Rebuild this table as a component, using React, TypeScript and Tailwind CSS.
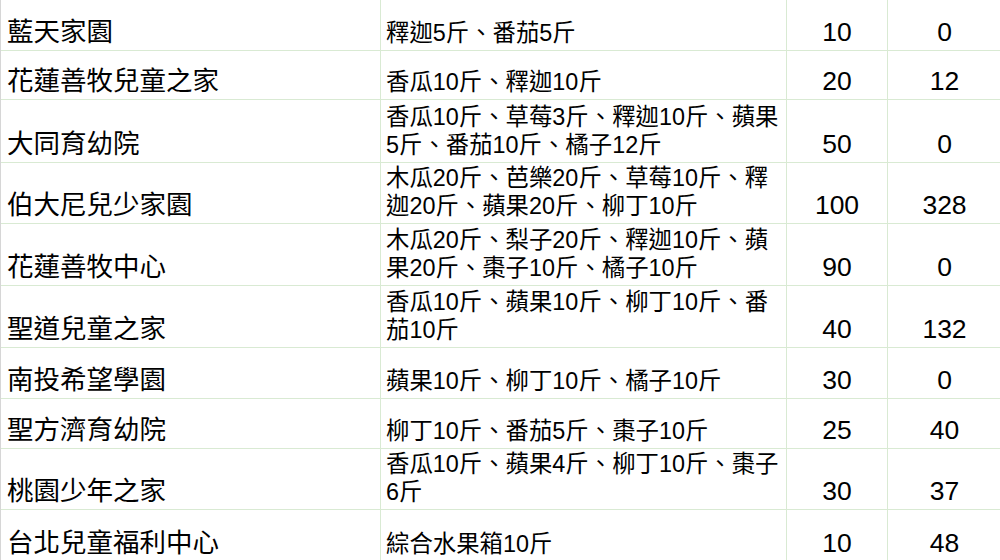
import React from 'react';

interface Row {
  name: string;
  items: string[];
  qty: number;
  got: number;
  height: string;
}

const rows: Row[] = [
  { name: '藍天家園', items: ['釋迦5斤、番茄5斤'], qty: 10, got: 0, height: 'h-[51px]' },
  { name: '花蓮善牧兒童之家', items: ['香瓜10斤、釋迦10斤'], qty: 20, got: 12, height: 'h-[49px]' },
  {
    name: '大同育幼院',
    items: ['香瓜10斤、草莓3斤、釋迦10斤、蘋果', '5斤、番茄10斤、橘子12斤'],
    qty: 50,
    got: 0,
    height: 'h-[63px]',
  },
  {
    name: '伯大尼兒少家園',
    items: ['木瓜20斤、芭樂20斤、草莓10斤、釋', '迦20斤、蘋果20斤、柳丁10斤'],
    qty: 100,
    got: 328,
    height: 'h-[61px]',
  },
  {
    name: '花蓮善牧中心',
    items: ['木瓜20斤、梨子20斤、釋迦10斤、蘋', '果20斤、棗子10斤、橘子10斤'],
    qty: 90,
    got: 0,
    height: 'h-[62px]',
  },
  {
    name: '聖道兒童之家',
    items: ['香瓜10斤、蘋果10斤、柳丁10斤、番', '茄10斤'],
    qty: 40,
    got: 132,
    height: 'h-[62px]',
  },
  { name: '南投希望學園', items: ['蘋果10斤、柳丁10斤、橘子10斤'], qty: 30, got: 0, height: 'h-[51px]' },
  { name: '聖方濟育幼院', items: ['柳丁10斤、番茄5斤、棗子10斤'], qty: 25, got: 40, height: 'h-[50px]' },
  {
    name: '桃園少年之家',
    items: ['香瓜10斤、蘋果4斤、柳丁10斤、棗子', '6斤'],
    qty: 30,
    got: 37,
    height: 'h-[61px]',
  },
  { name: '台北兒童福利中心', items: ['綜合水果箱10斤'], qty: 10, got: 48, height: 'h-[52px]' },
];

const App = () => {
  return (
    <div
      className="w-[1000px] h-[560px] overflow-hidden bg-white text-black"
      style={{ fontFamily: '"Liberation Sans", "Noto Sans CJK TC", sans-serif' }}
    >
      <div className="w-[1002px] border-l border-[#d6d6d6]">
        {rows.map((row) => (
          <div key={row.name} className={`flex border-b border-[#d9ead3] ${row.height}`}>
            {/* Name */}
            <div className="w-[380px] shrink-0 flex flex-col justify-end border-r border-[#d9ead3] pl-[6px] pb-[3px] text-[26.5px] leading-[30px] whitespace-nowrap">
              {row.name}
            </div>

            {/* Fruit list */}
            <div className="w-[406px] shrink-0 flex flex-col justify-end border-r border-[#d9ead3] pl-[5px] pb-[3px] text-[23.4px] leading-[28px] whitespace-nowrap">
              {row.items.map((line) => (
                <div key={line}>{line}</div>
              ))}
            </div>

            {/* Numbers */}
            <div className="w-[101px] shrink-0 flex flex-col justify-end items-center border-r border-[#d9ead3] pb-[3px] text-[26.5px] leading-[30px]">
              {row.qty}
            </div>
            <div className="w-[113px] shrink-0 flex flex-col justify-end items-center pb-[3px] text-[26.5px] leading-[30px]">
              {row.got}
            </div>
          </div>
        ))}
      </div>
    </div>
  );
};

export default App;
